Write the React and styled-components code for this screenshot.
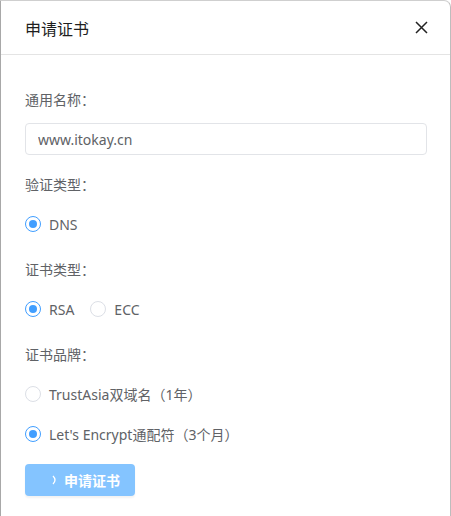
import React from "react";
import styled, { createGlobalStyle } from "styled-components";

const Global = createGlobalStyle`
  html, body { margin: 0; padding: 0; background: #fff; overflow: hidden; }
  body { font-family: "Noto Sans", "Noto Sans CJK SC", sans-serif; }
  * { box-sizing: border-box; }
`;

const Dialog = styled.div`
  width: 451px;
  height: 540px;
  background: #fff;
  border: 1px solid #cfcfcf;
  border-left-color: #a8a8a8;
  border-right-color: #bdbdbd;
  border-bottom: none;
  border-top-right-radius: 7px;
  display: flex;
  flex-direction: column;
`;

const Header = styled.div`
  height: 54px;
  flex: none;
  display: flex;
  align-items: center;
  justify-content: space-between;
  padding: 0 22px 0 24px;
  border-bottom: 1px solid #e4e4e4;
`;

const Title = styled.div`
  font-size: 16px;
  color: #1f1f1f;
  line-height: 20px;
  padding-top: 2px;
`;

const CloseButton = styled.button`
  border: none;
  background: none;
  padding: 0;
  width: 14px;
  height: 14px;
  display: flex;
  align-items: center;
  justify-content: center;
  cursor: pointer;
`;

const Body = styled.div`
  padding: 35px 23px 0 24px;
  display: flex;
  flex-direction: column;
`;

const Item = styled.div`
  display: flex;
  flex-direction: column;
  margin-bottom: ${(p) => p.$mb ?? 20}px;
`;

const Label = styled.div`
  font-size: 14px;
  line-height: 20px;
  color: #606266;
  margin-bottom: 13px;
`;

const Input = styled.input`
  height: 32px;
  width: 402px;
  border: 1px solid #e2e4e8;
  border-radius: 4px;
  padding: 0 12px;
  font-size: 14px;
  color: #606266;
  font-family: inherit;
  outline: none;
`;

const RadioRow = styled.div`
  display: flex;
  flex-direction: ${(p) => (p.$column ? "column" : "row")};
  gap: ${(p) => (p.$column ? 8 : 0)}px;
`;

const RadioLabel = styled.label`
  height: 32px;
  display: flex;
  align-items: center;
  margin-right: 16px;
  font-size: 14px;
  color: #606266;
  cursor: pointer;
`;

const Circle = styled.span`
  width: 16px;
  height: 16px;
  border-radius: 50%;
  border: 1px solid ${(p) => (p.$checked ? "#409eff" : "#dcdfe6")};
  display: flex;
  align-items: center;
  justify-content: center;
  margin-right: 8px;
  flex: none;
  &::after {
    content: "";
    width: 8px;
    height: 8px;
    border-radius: 50%;
    background: #409eff;
    display: ${(p) => (p.$checked ? "block" : "none")};
  }
`;

const SubmitButton = styled.button`
  margin-top: 6px;
  width: 110px;
  height: 32px;
  border: none;
  border-radius: 4px;
  background: #84c4ff;
  color: #fff;
  font-size: 14px;
  font-weight: bold;
  font-family: inherit;
  display: flex;
  align-items: center;
  justify-content: center;
  gap: 6px;
  padding: 0 0 0 12px;
  box-shadow: 0 2px 2px rgba(0, 0, 0, 0.05);
`;

const Radio = ({ checked, children }) => (
  <RadioLabel>
    <Circle $checked={checked} />
    {children}
  </RadioLabel>
);

export default function App() {
  return (
    <>
      <Global />
      <Dialog>
        <Header>
          <Title>申请证书</Title>
          <CloseButton aria-label="close">
            <svg width="13" height="13" viewBox="0 0 13 13">
              <path d="M1 1L12 12M12 1L1 12" stroke="#222" strokeWidth="1.5" />
            </svg>
          </CloseButton>
        </Header>
        <Body>
          <Item>
            <Label>通用名称：</Label>
            <Input defaultValue="www.itokay.cn" />
          </Item>
          <Item>
            <Label>验证类型：</Label>
            <RadioRow>
              <Radio checked>DNS</Radio>
            </RadioRow>
          </Item>
          <Item>
            <Label>证书类型：</Label>
            <RadioRow>
              <Radio checked>RSA</Radio>
              <Radio>ECC</Radio>
            </RadioRow>
          </Item>
          <Item $mb={8}>
            <Label>证书品牌：</Label>
            <RadioRow $column>
              <Radio>TrustAsia双域名（1年）</Radio>
              <Radio checked>Let's Encrypt通配符（3个月）</Radio>
            </RadioRow>
          </Item>
          <SubmitButton>
            <svg width="6" height="10" viewBox="0 0 6 10">
              <path d="M1 1 Q5 5 1 9" stroke="#fff" strokeWidth="1.3" fill="none" />
            </svg>
            申请证书
          </SubmitButton>
        </Body>
      </Dialog>
    </>
  );
}
